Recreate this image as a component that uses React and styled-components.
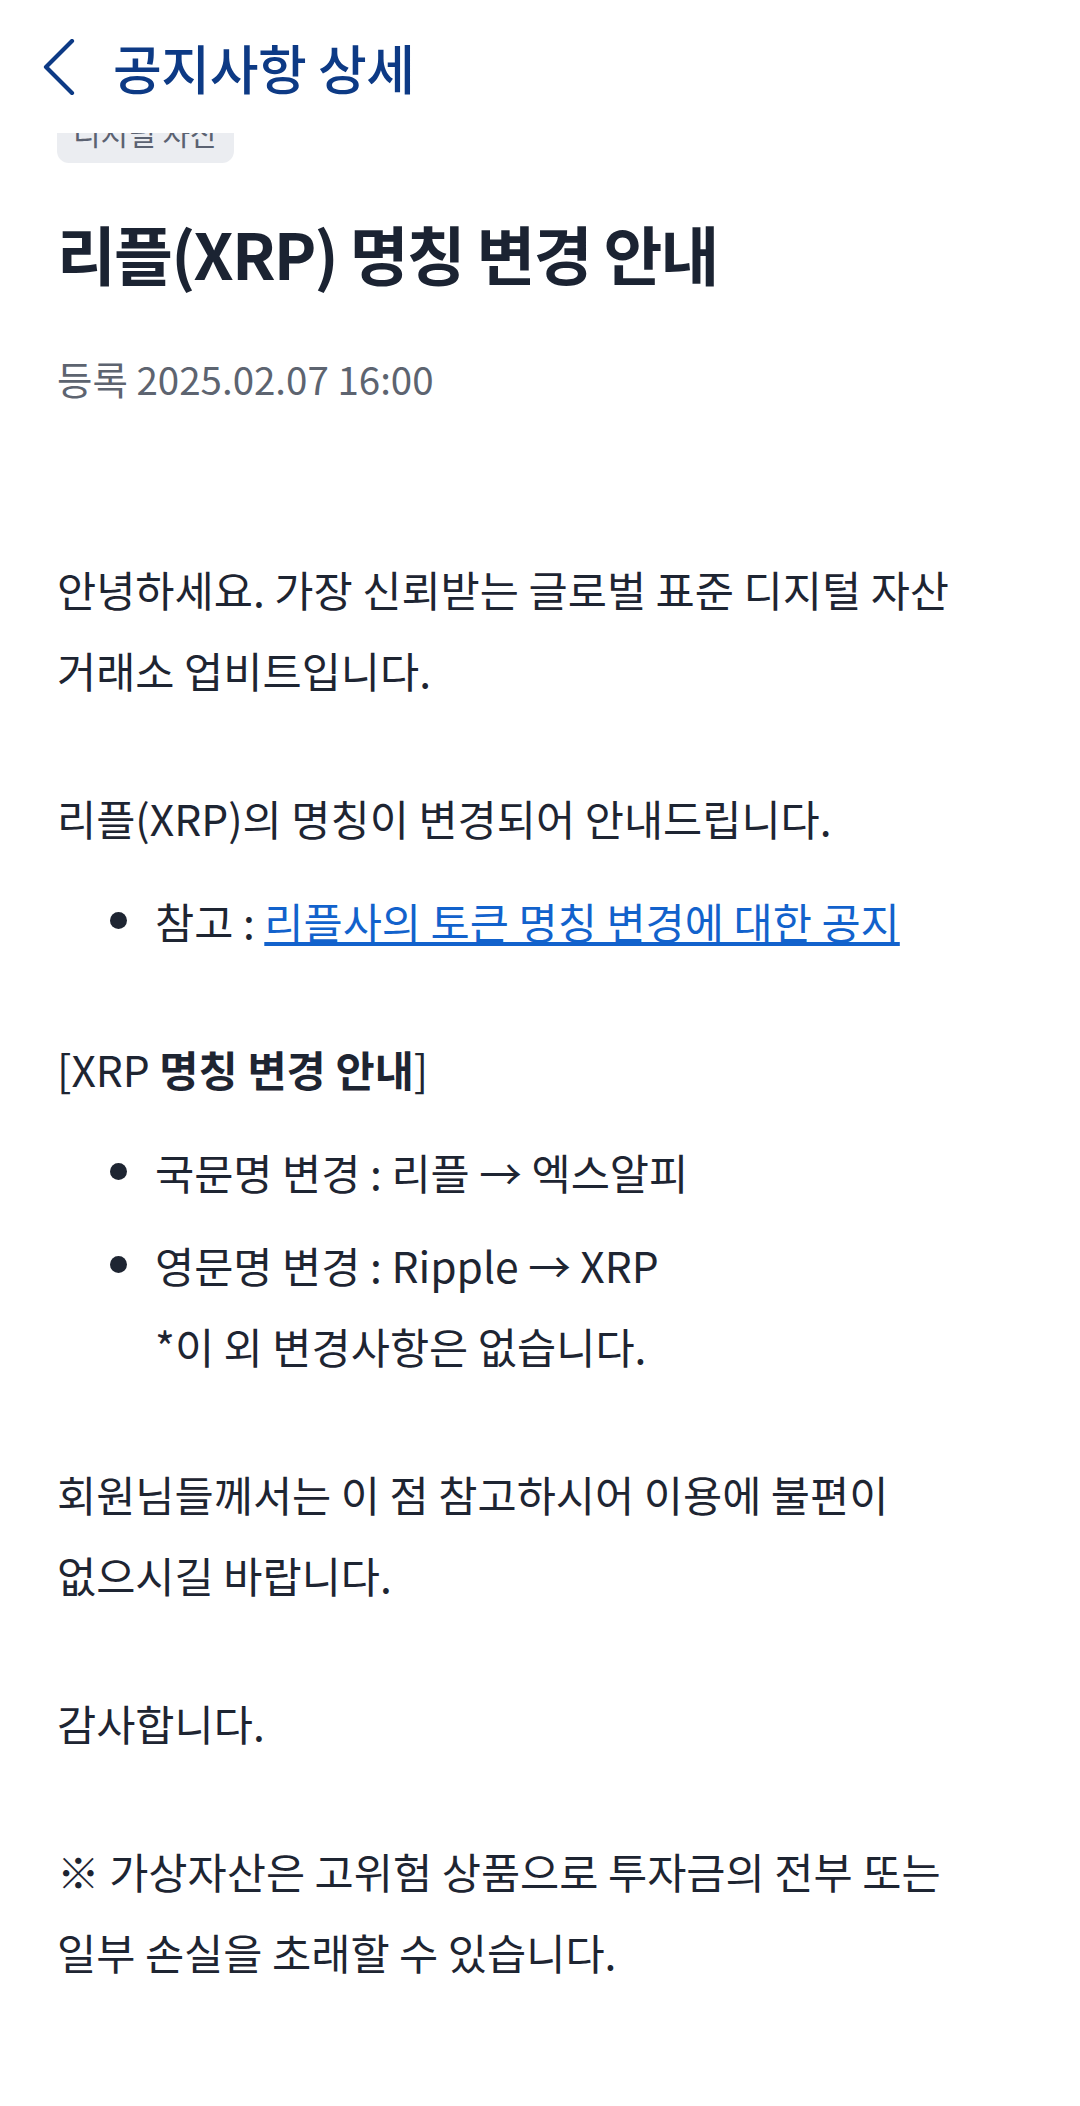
import React from "react";
import styled, { createGlobalStyle } from "styled-components";

const Global = createGlobalStyle`
  html, body { margin: 0; padding: 0; background: #ffffff; }
  body { font-family: "Noto Sans CJK KR", "Noto Sans", sans-serif; -webkit-font-smoothing: antialiased; }
  * { box-sizing: border-box; }
`;

const Page = styled.div`
  width: 1080px;
  min-height: 2106px;
  background: #fff;
`;

const Header = styled.header`
  position: relative;
  z-index: 2;
  height: 133px;
  background: #fff;
  display: flex;
  align-items: center;
  padding-left: 43px;
`;

const BackButton = styled.button`
  border: 0;
  background: none;
  padding: 0;
  width: 32px;
  height: 56px;
  display: flex;
  align-items: center;
  justify-content: center;
  cursor: pointer;
`;

const HeaderTitle = styled.h1`
  margin: 0 0 0 38px;
  font-size: 53px;
  font-weight: 500;
  line-height: 70px;
  color: #0d3a85;
  letter-spacing: -0.4px;
`;

const Content = styled.main`
  position: relative;
  z-index: 1;
  margin-top: -22px;
  padding: 0 57px 80px;
`;

const Tag = styled.span`
  display: inline-flex;
  align-items: center;
  height: 52px;
  padding: 0 16px 10px;
  border-radius: 12px;
  background: #ebedf1;
  color: #5b6271;
  font-size: 30px;
`;

const Title = styled.h2`
  margin: 46px 0 0;
  font-size: 64px;
  font-weight: 700;
  line-height: 87px;
  letter-spacing: -1.8px;
  color: #1b2332;
`;

const DateLine = styled.div`
  margin-top: 55px;
  font-size: 38.5px;
  line-height: 54px;
  color: #5d6470;
`;

const Body = styled.div`
  margin-top: 143px;
  font-size: 42.6px;
  line-height: 81px;
  color: #1e2532;
  word-break: keep-all;
  display: flex;
  flex-direction: column;
  gap: 67px;
`;

const Block = styled.div`
  display: flex;
  flex-direction: column;
  gap: 22px;
`;

const P = styled.p`
  margin: 0;
`;

const List = styled.ul`
  margin: 0;
  padding: 0;
  list-style: none;
  display: flex;
  flex-direction: column;
  gap: 12px;
`;

const Item = styled.li`
  display: flex;
  align-items: flex-start;
`;

const Dot = styled.span`
  flex: none;
  width: 17px;
  height: 17px;
  border-radius: 50%;
  background: #1e2532;
  margin: 32px 28px 0 53px;
`;

const ItemText = styled.span`
  flex: 1;
`;

const Link = styled.a`
  color: #1262cc;
  text-decoration: underline;
  text-decoration-thickness: 4px;
  text-underline-offset: 3px;
`;

const Strong = styled.strong`
  font-weight: 700;
`;

function Chevron() {
  return (
    <svg width="32" height="56" viewBox="0 0 32 56" fill="none">
      <path d="M29 2 L3 28 L29 54" stroke="#0d3a85" strokeWidth="4.2" strokeLinecap="round" strokeLinejoin="round" />
    </svg>
  );
}

export default function App() {
  return (
    <Page>
      <Global />
      <Header>
        <BackButton aria-label="뒤로">
          <Chevron />
        </BackButton>
        <HeaderTitle>공지사항 상세</HeaderTitle>
      </Header>
      <Content>
        <Tag>디지털 자산</Tag>
        <Title>리플(XRP) 명칭 변경 안내</Title>
        <DateLine>등록 2025.02.07 16:00</DateLine>
        <Body>
          <P>
            안녕하세요. 가장 신뢰받는 글로벌 표준 디지털 자산
            <br />
            거래소 업비트입니다.
          </P>
          <Block>
            <P>리플(XRP)의 명칭이 변경되어 안내드립니다.</P>
            <List>
              <Item>
                <Dot />
                <ItemText>
                  참고 : <Link href="#">리플사의 토큰 명칭 변경에 대한 공지</Link>
                </ItemText>
              </Item>
            </List>
          </Block>
          <Block>
            <P>
              [XRP <Strong>명칭 변경 안내</Strong>]
            </P>
            <List>
              <Item>
                <Dot />
                <ItemText>국문명 변경 : 리플 → 엑스알피</ItemText>
              </Item>
              <Item>
                <Dot />
                <ItemText>
                  영문명 변경 : Ripple → XRP
                  <br />
                  *이 외 변경사항은 없습니다.
                </ItemText>
              </Item>
            </List>
          </Block>
          <P>
            회원님들께서는 이 점 참고하시어 이용에 불편이
            <br />
            없으시길 바랍니다.
          </P>
          <P>감사합니다.</P>
          <P>
            ※ 가상자산은 고위험 상품으로 투자금의 전부 또는
            <br />
            일부 손실을 초래할 수 있습니다.
          </P>
        </Body>
      </Content>
    </Page>
  );
}
